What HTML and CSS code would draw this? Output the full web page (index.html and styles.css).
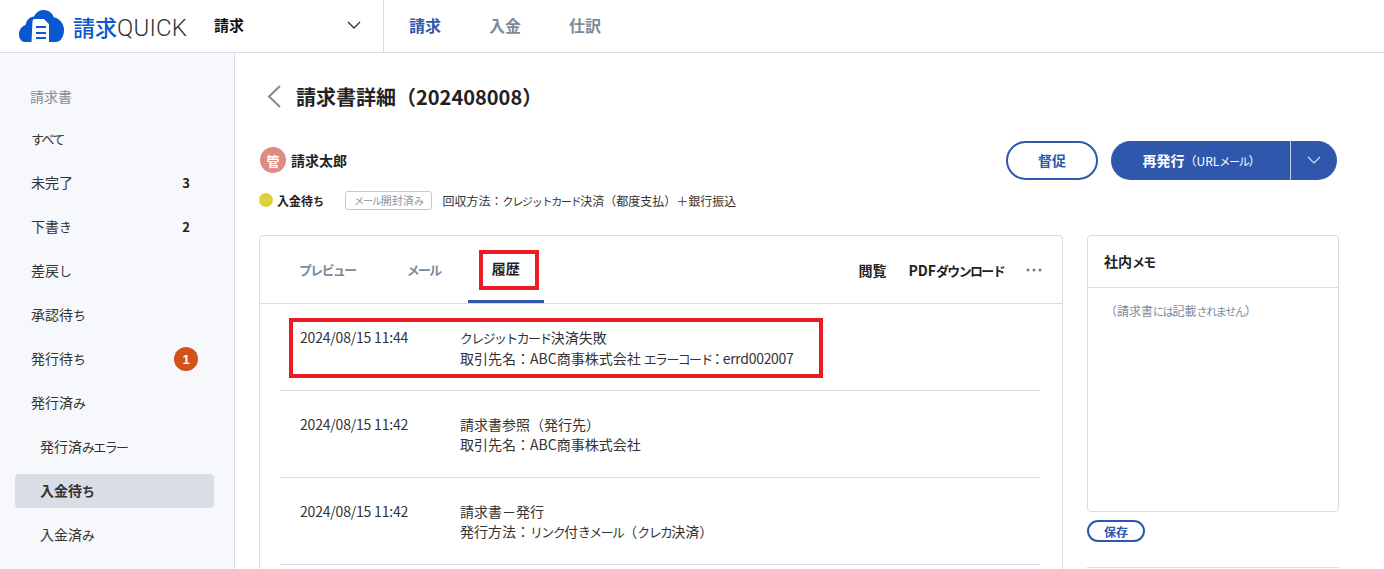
FILE: index.html
```html
<!DOCTYPE html>
<html lang="ja">
<head>
    <meta charset="UTF-8">
    <title>請求書詳細</title>
    <link rel="stylesheet" href="styles.css">
</head>
<body>
    <header class="topbar">
        <div class="logo">
            <svg class="logo-icon" width="46" height="33" viewBox="0 0 46 33">
                <path fill="#0b57d0" d="M6 32C2.500 32 0 28.500 0 24.500C0 19.500 3 16 6.500 15C7.500 10 11 6.500 15 6.500C17 2.500 20.500 0 24.500 0C29.500 0 33.500 3 35 7.500C39.500 8 45 12.500 45 20C45 27.500 41 32 37 32Z"/>
                <path fill="#fff" d="M13.500 11Q13.500 9 15.500 9H25L30 14V32H12.500Z"/>
                <rect x="17" y="16" width="10" height="2" fill="#0b57d0"/>
                <rect x="17" y="22" width="10" height="2" fill="#0b57d0"/>
                <rect x="17" y="27" width="10" height="2" fill="#0b57d0"/>
            </svg>
            <span class="logo-text"><span class="logo-ja">請求</span>QUICK</span>
        </div>
        <div class="selector">
            <span>請求</span>
            <svg width="14" height="8" viewBox="0 0 14 8"><path d="M1 1L7 7L13 1" fill="none" stroke="#333" stroke-width="1.300"/></svg>
        </div>
        <nav class="topnav">
            <a class="topnav-item active">請求</a>
            <a class="topnav-item">入金</a>
            <a class="topnav-item">仕訳</a>
        </nav>
    </header>

    <div class="layout">
        <aside class="sidebar">
            <div class="side-title">請求書</div>
            <div class="side-item"><span><span class="k">すべて</span></span></div>
            <div class="side-item">未完了<span class="count">3</span></div>
            <div class="side-item"><span>下書<span class="k">き</span></span><span class="count">2</span></div>
            <div class="side-item"><span>差戻<span class="k">し</span></span></div>
            <div class="side-item"><span>承認待<span class="k">ち</span></span></div>
            <div class="side-item"><span>発行待<span class="k">ち</span></span><span class="alert">1</span></div>
            <div class="side-item"><span>発行済<span class="k">み</span></span></div>
            <div class="side-item sub"><span>発行済<span class="k">みエラー</span></span></div>
            <div class="side-item sub current"><span>入金待<span class="k">ち</span></span></div>
            <div class="side-item sub"><span>入金済<span class="k">み</span></span></div>
        </aside>

        <main class="content">
            <div class="title-row">
                <svg width="16" height="24" viewBox="0 0 16 24"><path d="M14 2L3 12.500L14 23" fill="none" stroke="#7c8b99" stroke-width="2"/></svg>
                <h1>請求書詳細（202408008）</h1>
            </div>

            <div class="owner-row">
                <div class="owner">
                    <span class="avatar">管</span>
                    <span class="owner-name">請求太郎</span>
                </div>
                <div class="actions">
                    <button class="btn-outline">督促</button>
                    <div class="btn-main">
                        <span class="btn-main-label">再発行<small>（URL<span class="k">メール</span>）</small></span>
                        <span class="btn-main-arrow">
                            <svg width="14" height="8" viewBox="0 0 14 8"><path d="M1 1L7 7L13 1" fill="none" stroke="#d5dcec" stroke-width="1.200"/></svg>
                        </span>
                    </div>
                </div>
            </div>

            <div class="status-row">
                <span class="dot"></span>
                <span class="status">入金待<span class="k">ち</span></span>
                <span class="tag"><span class="k">メール</span>開封済<span class="k">み</span></span>
                <span>回収方法：<span class="k">クレジットカード</span>決済（都度支払）＋銀行振込</span>
            </div>

            <div class="columns">
                <section class="card">
                    <div class="tabs">
                        <a class="tab"><span class="k">プレビュー</span></a>
                        <a class="tab"><span class="k">メール</span></a>
                        <a class="tab selected">履歴<span class="mark mark-tab"></span></a>
                        <div class="tab-links">
                            <a>閲覧</a>
                            <a>PDF<span class="k">ダウンロード</span></a>
                            <svg width="16" height="4" viewBox="0 0 16 4" fill="#6f7d8b"><circle cx="2" cy="2" r="1.500"/><circle cx="8" cy="2" r="1.500"/><circle cx="14" cy="2" r="1.500"/></svg>
                        </div>
                    </div>
                    <div class="history">
                        <div class="log">
                            <span class="mark mark-log"></span>
                            <div class="log-date">2024/08/15 11:44</div>
                            <div><span class="k">クレジットカード</span>決済失敗<br>取引先名：ABC商事株式会社 <span class="k">エラーコード</span><span class="colon">：</span><span class="code">errd002007</span></div>
                        </div>
                        <div class="log">
                            <div class="log-date">2024/08/15 11:42</div>
                            <div>請求書参照（発行先）<br>取引先名：ABC商事株式会社</div>
                        </div>
                        <div class="log">
                            <div class="log-date">2024/08/15 11:42</div>
                            <div>請求書－発行<br>発行方法：<span class="k">リンク</span>付<span class="k">きメール</span>（<span class="k">クレカ</span>決済）</div>
                        </div>
                    </div>
                </section>

                <aside class="memo-col">
                    <div class="memo">
                        <div class="memo-head">社内<span class="k">メモ</span></div>
                        <div class="memo-body">（請求書<span class="k">には</span>記載<span class="k">されません</span>）</div>
                    </div>
                    <button class="btn-save">保存</button>
                    <div class="memo-line"></div>
                </aside>
            </div>
        </main>
    </div>
</body>
</html>
```

FILE: styles.css
```css
* { box-sizing: border-box; }

html, body { height: 100%; }

body {
    margin: 0;
    height: 569px;
    overflow: hidden;
    background-color: #fff;
    color: #222;
    font-family: "Noto Sans CJK JP", "Noto Sans", sans-serif;
    font-size: 14px;
}

/* kana runs are set narrow next to the kanji */
.k {
    font-size: 0.92em;
    letter-spacing: -0.12em;
}

/* header */
.topbar {
    display: flex;
    height: 53px;
    border-bottom: 1px solid #d8dce6;
}
.logo {
    display: flex;
    align-items: center;
    width: 214px;
    padding-left: 19px;
}
.logo-icon { flex: none; }
.logo-text {
    margin-left: 8px;
    font-family: "Roboto", sans-serif;
    font-weight: 300;
    font-size: 24px;
    letter-spacing: 0.2px;
    color: #333;
    white-space: nowrap;
}
.logo-ja {
    font-family: "Noto Sans CJK JP", sans-serif;
    font-weight: 500;
    font-size: 22px;
    letter-spacing: 0;
    color: #0b57d0;
}
.selector {
    display: flex;
    align-items: center;
    justify-content: space-between;
    width: 170px;
    padding: 0 22px 3px 0;
    border-right: 1px solid #d8dce6;
    font-size: 15px;
    font-weight: 700;
    color: #111;
}
.topnav {
    display: flex;
    align-items: center;
    gap: 48px;
    padding: 0 0 3px 25px;
}
.topnav-item {
    font-size: 16px;
    font-weight: 700;
    color: #7c8b99;
}
.topnav-item.active { color: #2f58ad; }

.layout {
    display: flex;
    height: 516px;
}

/* sidebar */
.sidebar {
    flex: none;
    width: 235px;
    padding: 22px 20px 0 15px;
    background-color: #f6f8fc;
    border-right: 1px solid #d8dce6;
}
.side-title {
    height: 47px;
    padding-left: 15px;
    line-height: 42px;
    color: #7c8b99;
}
.side-item {
    display: flex;
    align-items: center;
    justify-content: space-between;
    height: 34px;
    margin-bottom: 10px;
    padding: 0 16px 2px;
    color: #333;
    border-radius: 4px;
}
.side-item.sub { padding-left: 25px; }
.side-item.current {
    background-color: #d9dde5;
    font-weight: 700;
}
.count {
    font-weight: 700;
    font-size: 13px;
    padding-right: 8px;
    color: #222;
}
.alert {
    display: flex;
    align-items: center;
    justify-content: center;
    width: 24px;
    height: 24px;
    margin-top: 2px;
    border-radius: 50%;
    background-color: #d2521a;
    color: #fff;
    font-family: "Liberation Sans", sans-serif;
    font-size: 13px;
    font-weight: 700;
}

/* main */
.content {
    flex: 1;
    padding: 25px 45px 0 24px;
}
.title-row {
    display: flex;
    align-items: center;
    gap: 14px;
    height: 36px;
    padding-left: 7px;
}
.title-row h1 {
    margin: 0;
    font-size: 20px;
    font-weight: 700;
    color: #222;
}
.owner-row {
    display: flex;
    align-items: center;
    justify-content: space-between;
    margin-top: 26px;
    height: 40px;
}
.owner {
    display: flex;
    align-items: center;
    gap: 5px;
    padding-left: 1px;
}
.avatar {
    display: flex;
    align-items: center;
    justify-content: center;
    width: 26px;
    height: 26px;
    border-radius: 50%;
    background-color: #e08a84;
    color: #fff;
    font-size: 13px;
    font-weight: 700;
}
.owner-name {
    font-weight: 700;
}
.actions {
    display: flex;
    align-items: center;
    gap: 13px;
    margin-right: 2px;
}
.btn-outline {
    width: 92px;
    height: 39px;
    border: 2px solid #2f58ad;
    border-radius: 20px;
    background: #fff;
    color: #2f58ad;
    font-family: inherit;
    font-size: 14px;
    font-weight: 700;
}
.btn-main {
    display: flex;
    width: 226px;
    height: 39px;
    border-radius: 20px;
    background-color: #2f58ad;
    color: #fff;
}
.btn-main-label {
    flex: 1;
    text-align: center;
    line-height: 39px;
    font-weight: 700;
    padding-left: 2px;
}
.btn-main-label small {
    font-size: 12px;
    font-weight: 400;
}
.btn-main-arrow {
    display: flex;
    align-items: center;
    justify-content: center;
    width: 47px;
    border-left: 1px solid #c5cfe6;
}
.status-row {
    display: flex;
    align-items: center;
    height: 20px;
    margin-top: 10px;
    font-size: 12px;
    color: #333;
}
.dot {
    width: 14px;
    height: 14px;
    border-radius: 50%;
    background-color: #dcd23f;
}
.status {
    margin-left: 4px;
    width: 68px;
    font-weight: 700;
    color: #222;
}
.tag {
    height: 19px;
    margin-right: 11px;
    padding: 0 8px;
    line-height: 17px;
    border: 1px solid #c3c8d6;
    border-radius: 3px;
    font-size: 11px;
    color: #8a94a3;
}
.columns {
    display: flex;
    gap: 24px;
    margin-top: 25px;
}

/* card */
.card {
    position: relative;
    flex: none;
    width: 804px;
    height: 400px;
    border: 1px solid #d8dce6;
    border-radius: 4px;
}
.tabs {
    display: flex;
    align-items: stretch;
    gap: 3px;
    height: 68px;
    padding: 0 20px 0 15px;
    border-bottom: 1px solid #d8dce6;
}
.tab {
    position: relative;
    display: flex;
    align-items: center;
    justify-content: center;
    padding: 0 24px;
    font-weight: 700;
    color: #7c8b99;
}
.tab.selected {
    color: #222;
    border-bottom: 3px solid #2f58ad;
}
.tab-links {
    display: flex;
    align-items: center;
    gap: 22px;
    margin-left: auto;
    font-weight: 700;
    color: #222;
}
.history { padding: 0 22px 0 20px; }
.log {
    position: relative;
    display: flex;
    height: 87px;
    padding: 23px 0 0 20px;
    line-height: 20px;
    border-bottom: 1px solid #d8dce6;
    color: #333;
}
.log-date {
    width: 160px;
    letter-spacing: -0.2px;
}
.colon {
    margin: 0 2px;
    font-feature-settings: "palt";
}
.code { letter-spacing: -0.3px; }

/* red marks lying over the screenshot */
.mark {
    position: absolute;
    border: 4px solid #ed1c24;
}
.mark-tab {
    left: 11px;
    top: 14px;
    width: 60px;
    height: 40px;
}
.mark-log {
    left: 9px;
    top: 14px;
    width: 534px;
    height: 60px;
}

/* memo */
.memo-col {
    flex: none;
    width: 252px;
}
.memo {
    height: 277px;
    border: 1px solid #d8dce6;
    border-radius: 4px;
}
.memo-head {
    height: 52px;
    padding-left: 16px;
    line-height: 51px;
    font-weight: 700;
    border-bottom: 1px solid #d8dce6;
}
.memo-body {
    padding: 14px 17px;
    font-size: 12px;
    color: #7c8b99;
}
.btn-save {
    display: block;
    width: 58px;
    height: 22px;
    margin-top: 8px;
    padding: 0;
    border: 2px solid #2f58ad;
    border-radius: 11px;
    background: #fff;
    color: #2f58ad;
    font-family: inherit;
    font-size: 12px;
    font-weight: 700;
}
.memo-line {
    margin-top: 25px;
    border-top: 1px solid #d8dce6;
}
```
